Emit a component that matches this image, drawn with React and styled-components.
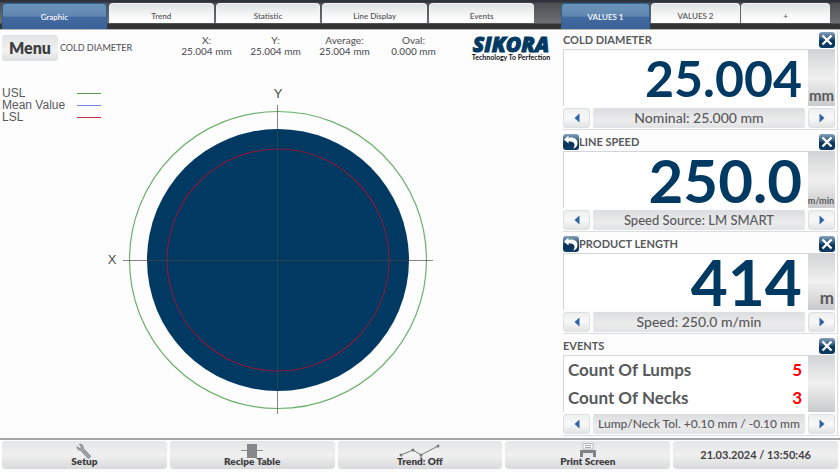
import styled, { createGlobalStyle } from 'styled-components';

const TABS = ['Graphic', 'Trend', 'Statistic', 'Line Display', 'Events'];
const VALUE_TABS = ['VALUES 1', 'VALUES 2', '+'];

const READOUTS = [
    { label: 'X:', value: '25.004 mm' },
    { label: 'Y:', value: '25.004 mm' },
    { label: 'Average:', value: '25.004 mm' },
    { label: 'Oval:', value: '0.000 mm' },
];

const LEGEND = [
    { label: 'USL', color: '#4fa54f' },
    { label: 'Mean Value', color: '#7585e6' },
    { label: 'LSL', color: '#c62f45' },
];

const VALUES = [
    { title: 'COLD DIAMETER', value: '25.004', size: 50, unit: 'mm', unitSize: 15, info: 'Nominal: 25.000 mm' },
    { title: 'LINE SPEED', value: '250.0', size: 60, unit: 'm/min', unitSize: 9, info: 'Speed Source: LM SMART', infoSize: 13, reset: true },
    { title: 'PRODUCT LENGTH', value: '414', size: 64, unit: 'm', unitSize: 17, info: 'Speed: 250.0 m/min', reset: true },
];

const EVENTS = [
    { label: 'Count Of Lumps', count: 5 },
    { label: 'Count Of Necks', count: 3 },
];

const CloseIcon = () => (
    <svg width="16" height="16" viewBox="0 0 16 16" aria-hidden="true">
        <path d="M3.5 3.5 L12.5 12.5 M12.5 3.5 L3.5 12.5" stroke="#fff" strokeWidth="2.4" />
    </svg>
)

const ResetIcon = () => (
    <svg width="16" height="16" viewBox="0 0 16 16" aria-hidden="true">
        <path d="M1 5.5 L5.5 1.5 V4 C11 2.5 15 5.5 14.5 10 C14.2 12.5 12.5 14 10 14.5 C12.8 11.5 12 6.8 5.5 7.2 V9.5 Z" fill="#fff" />
    </svg>
)

const ArrowIcon = ({ right }) => (
    <svg width="6" height="10" viewBox="0 0 6 10" aria-hidden="true">
        <path d={right ? 'M0.5 0.5 L5.5 5 L0.5 9.5 Z' : 'M5.5 0.5 L0.5 5 L5.5 9.5 Z'} fill="#2f64a3" />
    </svg>
)

const SetupIcon = () => (
    <svg width="16" height="16" viewBox="0 0 16 16" aria-hidden="true">
        <path d="M3.2 1.2 L5.3 3.4 L4.8 5 L3.2 5.4 L1.2 3.4 C0.7 5.6 2.2 7.6 4.6 7.3 L11.6 15 C12.8 16 15.2 14 14.3 12.6 L7.3 5.3 C7.6 2.6 5.6 0.6 3.2 1.2 Z" fill="#a0a2a4" stroke="#808284" strokeWidth="0.8" />
    </svg>
)

const RecipeIcon = () => (
    <svg width="22" height="16" viewBox="0 0 22 16" aria-hidden="true">
        <path d="M0 7.5 H22" stroke="#8c8e90" />
        <rect x="6" y="1" width="10" height="14" fill="#85878a" />
    </svg>
)

const TrendIcon = () => (
    <svg width="42" height="16" viewBox="0 0 42 16" aria-hidden="true">
        <path d="M2 12 L14 7 L22 12 L39 3" fill="none" stroke="#77797b" />
        <path d="M22 12 V16" stroke="#77797b" />
        <g fill="#77797b">
            <circle cx="2" cy="12" r="1.5" />
            <circle cx="14" cy="7" r="1.5" />
            <circle cx="22" cy="12" r="1.5" />
            <circle cx="39" cy="3" r="1.5" />
        </g>
    </svg>
)

const PrintIcon = () => (
    <svg width="18" height="16" viewBox="0 0 18 16" aria-hidden="true">
        <path d="M4 0.5 H14 V6 H4 Z" fill="#fff" stroke="#b5b7b9" />
        <path d="M6 2.5 H12 M6 4.5 H12" stroke="#a5a7a9" />
        <path d="M1 7 H17 V14 H1 Z" fill="#808285" />
        <path d="M4 10 H14 V14 H4 Z" fill="#e9eaeb" />
    </svg>
)

const ACTIONS = [
    { label: 'Setup', Icon: SetupIcon },
    { label: 'Recipe Table', Icon: RecipeIcon },
    { label: 'Trend: Off', Icon: TrendIcon },
    { label: 'Print Screen', Icon: PrintIcon },
];

const CrossSection = () => (
    <Diagram viewBox="0 0 345 330" role="img" aria-label="Cable cross section">
        <circle cx="173" cy="173" r="131" fill="#003a63" />
        <circle cx="173" cy="173" r="148.5" fill="none" stroke="#6db16d" strokeWidth="1.2" />
        <circle cx="173" cy="173" r="111" fill="none" stroke="#84193a" strokeWidth="1.2" />
        <path d="M18 173.5 H328 M172.5 18 V327" stroke="#444" strokeOpacity="0.65" />
        <text x="173" y="11" textAnchor="middle">Y</text>
        <text x="7" y="177" textAnchor="middle">X</text>
    </Diagram>
)

const Panel = ({ title, reset, info, infoSize = 14, unit, unitSize, children }) => (
    <PanelContainer>
        <PanelHeader>
            {reset && <IconButton aria-label={`Reset ${title}`}><ResetIcon /></IconButton>}
            <PanelTitle>{title}</PanelTitle>
            <IconButton aria-label={`Close ${title}`}><CloseIcon /></IconButton>
        </PanelHeader>
        <PanelBody>
            <PanelContent>{children}</PanelContent>
            <Unit $size={unitSize}>{unit}</Unit>
        </PanelBody>
        <PanelNav>
            <NavButton aria-label="Previous"><ArrowIcon /></NavButton>
            <NavInfo $size={infoSize}>{info}</NavInfo>
            <NavButton aria-label="Next"><ArrowIcon right /></NavButton>
        </PanelNav>
    </PanelContainer>
)

const App = () => {
    return (
        <>
            <GlobalStyle />
            <Screen>
                {/* Tabs */}
                <TabBar>
                    <MainTabs>
                        {TABS.map((tab, i) => <Tab key={tab} $active={i === 0}>{tab}</Tab>)}
                    </MainTabs>
                    <ValueTabs>
                        {VALUE_TABS.map((tab, i) => <Tab key={tab} $active={i === 0}>{tab}</Tab>)}
                    </ValueTabs>
                </TabBar>

                <Content>
                    {/* Graphic */}
                    <Graphic>
                        <Toolbar>
                            <MenuButton>Menu</MenuButton>
                            <ToolbarTitle>COLD DIAMETER</ToolbarTitle>
                            <Readouts>
                                {READOUTS.map(({ label, value }) => (
                                    <Readout key={label}>
                                        <span>{label}</span>
                                        <span>{value}</span>
                                    </Readout>
                                ))}
                            </Readouts>
                            <Logo>
                                <LogoName>SIKORA</LogoName>
                                <LogoClaim>Technology To Perfection</LogoClaim>
                            </Logo>
                        </Toolbar>
                        <Chart>
                            <Legend>
                                {LEGEND.map(({ label, color }) => (
                                    <LegendItem key={label}>
                                        {label}
                                        <LegendLine $color={color} />
                                    </LegendItem>
                                ))}
                            </Legend>
                            <CrossSection />
                        </Chart>
                    </Graphic>

                    {/* Values */}
                    <Sidebar>
                        {VALUES.map(({ value, size, ...panel }) => (
                            <Panel key={panel.title} {...panel}>
                                <BigValue $size={size}>{value}</BigValue>
                            </Panel>
                        ))}
                        <Panel title="EVENTS" info="Lump/Neck Tol. +0.10 mm / -0.10 mm" infoSize={12}>
                            <EventTable>
                                <tbody>
                                    {EVENTS.map(({ label, count }) => (
                                        <tr key={label}>
                                            <th scope="row">{label}</th>
                                            <td>{count}</td>
                                        </tr>
                                    ))}
                                </tbody>
                            </EventTable>
                        </Panel>
                    </Sidebar>
                </Content>

                {/* Footer */}
                <Footer>
                    {ACTIONS.map(({ label, Icon }) => (
                        <FooterButton key={label}>
                            <Icon />
                            <span>{label}</span>
                        </FooterButton>
                    ))}
                    <Clock>21.03.2024 / 13:50:46</Clock>
                </Footer>
            </Screen>
        </>
    )
}

export default App


const GlobalStyle = createGlobalStyle`
    * {
        box-sizing: border-box;
    }

    body {
        margin: 0;
        background-color: #fdfdfd;
        color: #58595b;
        font-family: Lato, "Liberation Sans", sans-serif;
    }

    button {
        margin: 0;
        padding: 0;
        border: none;
        color: inherit;
        font-family: inherit;
        cursor: pointer;
    }

    svg {
        display: block;
    }
`

const Screen = styled.div`
    display: flex;
    flex-direction: column;
    min-height: 100vh;
`

const TabBar = styled.nav`
    display: grid;
    grid-template-columns: 2fr 1fr;
    height: 30px;
    padding-top: 3px;
    background: linear-gradient(#2d323c 0, #2d323c 2px, #4c4d50 3px, #707174 23px, #343434 24px, #343434 29px, #b5b5b5 29px);
`

const MainTabs = styled.div`
    display: flex;
    gap: 2px;
    padding: 0 26px 0 2px;
`

const ValueTabs = styled.div`
    display: flex;
    gap: 1px;
    padding: 0 10px 0 1px;
`

const Tab = styled.button`
    flex: 1;
    height: ${({ $active }) => ($active ? 26 : 20)}px;
    padding-top: ${({ $active }) => ($active ? 0 : 5)}px;
    border: 1px solid ${({ $active }) => ($active ? '#2a6496' : '#f4f4f4')};
    border-bottom: none;
    border-radius: 4px 4px 0 0;
    background: ${({ $active }) => ($active
        ? 'linear-gradient(#6c93b8, #6289b2 45%, #42699f 55%, #3b6299)'
        : 'linear-gradient(#dfe0e1, #fafafa 70%, #fff)')};
    color: ${({ $active }) => ($active ? '#fff' : '#58595b')};
    font-size: 8px;
    font-weight: 600;
    line-height: 12px;
`

const Content = styled.main`
    display: grid;
    grid-template-columns: 2fr 1fr;
    flex: 1;
`

const Graphic = styled.section`
    display: flex;
    flex-direction: column;
    min-width: 0;
`

const Toolbar = styled.header`
    display: flex;
    align-items: center;
    height: 35px;
    padding: 0 8px 0 2px;
`

const MenuButton = styled.button`
    width: 56px;
    height: 26px;
    border-radius: 3px;
    background: linear-gradient(#e2e3e4, #f2f2f2 60%, #dcddde);
    color: #3f4042;
    font-size: 16px;
    font-weight: 800;
`

const ToolbarTitle = styled.h1`
    flex: 1;
    margin: 0 0 0 2px;
    font-size: 9px;
    font-weight: 500;
    white-space: nowrap;
`

const Readouts = styled.div`
    display: flex;
    margin-right: 22px;
    margin-bottom: 3px;
`

const Readout = styled.div`
    display: flex;
    flex-direction: column;
    align-items: center;
    width: 69px;
    font-size: 10px;
    font-weight: 500;
    line-height: 11px;
`

const Logo = styled.div`
    display: flex;
    flex-direction: column;
    align-items: center;
    width: 82px;
    white-space: nowrap;
`

const LogoName = styled.strong`
    color: #003a63;
    font-family: "Open Sans", Lato, sans-serif;
    font-size: 21px;
    font-style: italic;
    font-weight: 800;
    line-height: 18px;
    -webkit-text-stroke: 1px #003a63;
`

const LogoClaim = styled.span`
    color: #111;
    font-size: 7px;
    font-weight: 700;
    line-height: 8px;
`

const Chart = styled.div`
    display: grid;
    grid-template-columns: 105px 1fr 110px;
    align-items: start;
    padding-top: 22px;
    font-family: "Liberation Sans", Arial, sans-serif;
`

const Legend = styled.ul`
    margin: 0;
    padding: 0 4px 0 2px;
    list-style: none;
`

const LegendItem = styled.li`
    display: flex;
    align-items: center;
    justify-content: space-between;
    font-size: 12px;
    line-height: 12px;
    white-space: nowrap;
`

const LegendLine = styled.span`
    width: 24px;
    border-top: 1px solid ${({ $color }) => $color};
`

const Diagram = styled.svg`
    width: 100%;

    > text {
        fill: #4a4a4a;
        font-size: 13px;
    }
`

const Sidebar = styled.aside`
    min-width: 0;
    padding: 0 2px 0 3px;
`

const PanelContainer = styled.section`
    margin-bottom: 2px;
    padding: 0 2px 1px 0;
    border-right: 1px solid #dcdcdc;
    border-bottom: 1px solid #dcdcdc;
`

const PanelHeader = styled.div`
    display: flex;
    align-items: center;
    height: 19px;
`

const PanelTitle = styled.h2`
    flex: 1;
    margin: 0;
    font-size: 11px;
    font-weight: 700;
`

const IconButton = styled.button`
    width: 16px;
    height: 16px;
    border-radius: 3px;
    background: linear-gradient(#86a3bb, #2c5478 45%, #0a3459 55%, #0d3c64);
`

const PanelBody = styled.div`
    display: flex;
    height: 57px;
    border-top: 1px solid #d4d5d6;
    border-left: 1px solid #d4d5d6;
    background-color: #fff;
`

const PanelContent = styled.div`
    flex: 1;
    padding: 0 6px 0 4px;
`

const BigValue = styled.output`
    display: block;
    color: #003a63;
    font-size: ${({ $size }) => $size}px;
    font-weight: 700;
    line-height: 56px;
    text-align: right;
`

const Unit = styled.div`
    display: flex;
    align-items: flex-end;
    justify-content: flex-end;
    width: 27px;
    padding: 0 1px 2px 0;
    background: linear-gradient(#d3d4d5, #f0f0f0 50%, #c9cacb);
    font-size: ${({ $size }) => $size}px;
    font-weight: 700;
`

const PanelNav = styled.div`
    display: flex;
    gap: 3px;
    margin-top: 2px;
`

const NavButton = styled.button`
    display: flex;
    align-items: center;
    justify-content: center;
    flex: none;
    width: 27px;
    height: 20px;
    border: 1px solid #dedfe0;
    border-radius: 3px;
    background: linear-gradient(#eeefef, #f8f8f8 50%, #e2e3e4);
`

const NavInfo = styled.div`
    flex: 1;
    border-radius: 2px;
    background: linear-gradient(#dcddde, #ebebec 60%, #e2e3e4);
    font-size: ${({ $size }) => $size}px;
    font-weight: 500;
    line-height: 20px;
    text-align: center;
    white-space: nowrap;
`

const EventTable = styled.table`
    width: 100%;
    border-collapse: collapse;
    font-size: 17px;
    font-weight: 700;
    line-height: 28px;

    th, td {
        padding: 0;
    }

    th {
        text-align: left;
    }

    td {
        color: #f00;
        text-align: right;
    }
`

const Footer = styled.footer`
    display: grid;
    grid-template-columns: repeat(5, 1fr);
    gap: 3px;
    padding: 1px 2px 4px;
    border-top: 2px solid #a3a4a6;
`

const FooterButton = styled.button`
    display: flex;
    flex-direction: column;
    align-items: center;
    height: 28px;
    padding-top: 2px;
    border-radius: 4px;
    background: linear-gradient(#e4e5e6, #f0f0f0 50%, #d8d9da);
    color: #3f4042;
    font-size: 10px;
    font-weight: 800;
    line-height: 10px;

    > svg {
        margin-bottom: -3px;
    }
`

const Clock = styled.div`
    height: 28px;
    border-radius: 4px;
    background: linear-gradient(#e4e5e6, #f0f0f0 50%, #d8d9da);
    color: #3f4042;
    font-size: 11px;
    font-weight: 700;
    line-height: 28px;
    text-align: center;
`
